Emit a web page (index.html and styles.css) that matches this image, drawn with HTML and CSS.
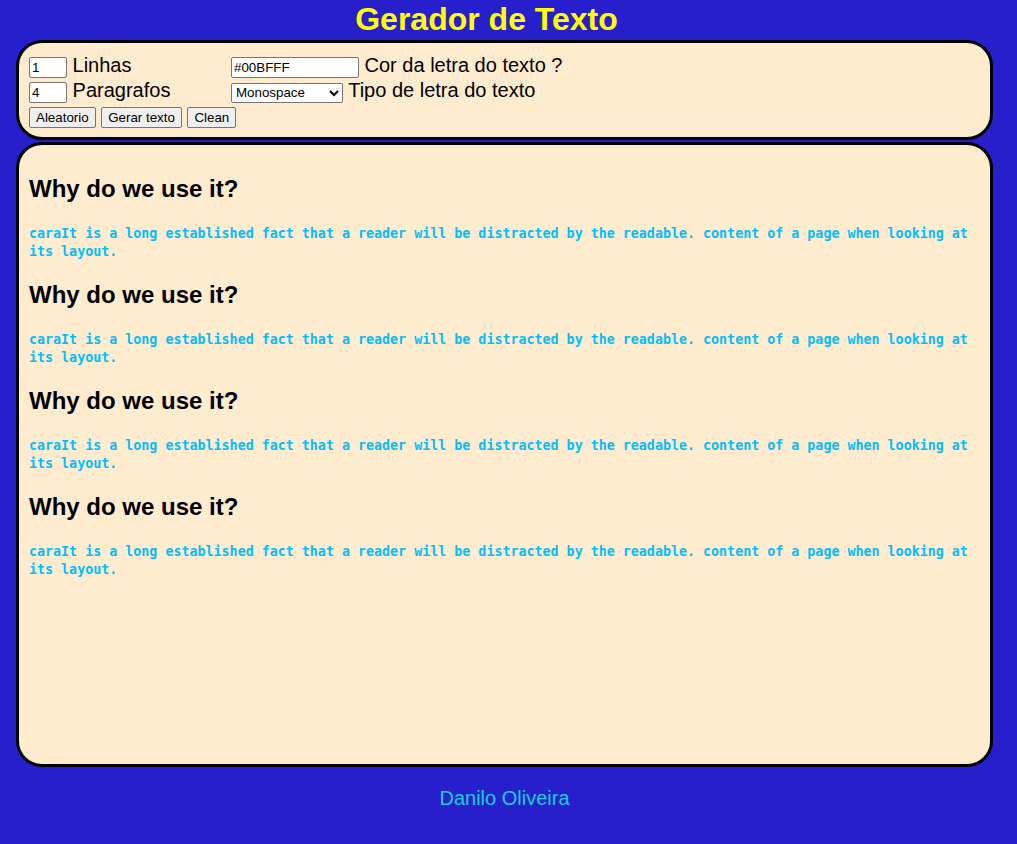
FILE: index.html
```html
<!DOCTYPE html>
<html lang="pt">
<head>
<meta charset="utf-8">
<title>Gerador de Texto</title>
<link rel="stylesheet" href="styles.css">
</head>
<body>
<h1 class="title">Gerador de Texto</h1>
<div class="panel controls">
  <div class="grid">
    <div class="cell"><input class="num" type="text" value="1"> Linhas</div>
    <div class="cell"><input class="color" type="text" value="#00BFFF"> Cor da letra do texto ?</div>
    <div class="cell"><input class="num" type="text" value="4"> Paragrafos</div>
    <div class="cell"><select class="font"><option>Monospace</option></select> Tipo de letra do texto</div>
    <div class="cell buttons"><button class="btn">Aleatorio</button> <button class="btn">Gerar texto</button> <button class="btn">Clean</button></div>
  </div>
</div>
<div class="panel output">
  <h2 class="heading">Why do we use it?</h2>
  <p class="para">caraIt is a long established fact that a reader will be distracted by the readable. content of a page when looking at its layout.</p>
  <h2 class="heading">Why do we use it?</h2>
  <p class="para">caraIt is a long established fact that a reader will be distracted by the readable. content of a page when looking at its layout.</p>
  <h2 class="heading">Why do we use it?</h2>
  <p class="para">caraIt is a long established fact that a reader will be distracted by the readable. content of a page when looking at its layout.</p>
  <h2 class="heading">Why do we use it?</h2>
  <p class="para">caraIt is a long established fact that a reader will be distracted by the readable. content of a page when looking at its layout.</p>
</div>
<p class="footer">Danilo Oliveira</p>
</body>
</html>
```
FILE: styles.css
```css
html, body {
  margin: 0;
  padding: 0;
}
body {
  background: #281fcc;
  font-family: "Liberation Sans", Arial, sans-serif;
  padding-top: 1px;
}
.title {
  margin: 0;
  padding-right: 44px;
  text-align: center;
  color: #ffff00;
  font-size: 32px;
  font-weight: bold;
  line-height: 37px;
}
.panel {
  box-sizing: border-box;
  width: 977px;
  margin: 0 0 0 16px;
  background: #ffebcd;
  border: 3px solid #000;
  border-radius: 26px;
  padding: 10px;
}
.controls {
  margin-top: 2px;
  height: 100px;
  padding-top: 11px;
  font-size: 20px;
  color: #000;
}
.grid {
  display: grid;
  grid-template-columns: 202px 1fr;
}
.cell {
  line-height: 23px;
  height: 25px;
}
.cell.buttons {
  grid-column: 1 / 3;
  height: auto;
  padding-top: 0;
}
.num, .color {
  box-sizing: border-box;
  height: 21px;
  border: 1px solid #767676;
  border-radius: 2px;
  padding: 1px 2px;
  font-family: "Liberation Sans", Arial, sans-serif;
  font-size: 13.33px;
  color: #000;
  background: #fff;
  vertical-align: baseline;
}
.num { width: 38px; }
.color { width: 128px; }
.font {
  box-sizing: border-box;
  width: 112px;
  height: 20px;
  border: 1px solid #767676;
  border-radius: 2px;
  font-family: "Liberation Sans", Arial, sans-serif;
  font-size: 13.33px;
  color: #000;
  background: #fff;
}
.btn {
  box-sizing: border-box;
  height: 21px;
  padding: 1px 6px;
  border: 1px solid #767676;
  border-radius: 2px;
  background: #efefef;
  font-family: "Liberation Sans", Arial, sans-serif;
  font-size: 13.33px;
  color: #000;
}
.output {
  margin-top: 2px;
  height: 625px;
  overflow: hidden;
}
.heading {
  margin: 19.92px 0;
  font-size: 24px;
  font-weight: bold;
  color: #000;
  line-height: 27.6px;
}
.para {
  margin: 22.6px 0 13.33px;
  font-family: "DejaVu Sans Mono", "Liberation Mono", monospace;
  font-weight: bold;
  font-size: 13.33px;
  line-height: 18px;
  color: #00bfff;
}
.footer {
  width: 977px;
  margin: 20px 0 0 16px;
  text-align: center;
  font-size: 20px;
  line-height: 23px;
  color: #14cfe0;
}
```
